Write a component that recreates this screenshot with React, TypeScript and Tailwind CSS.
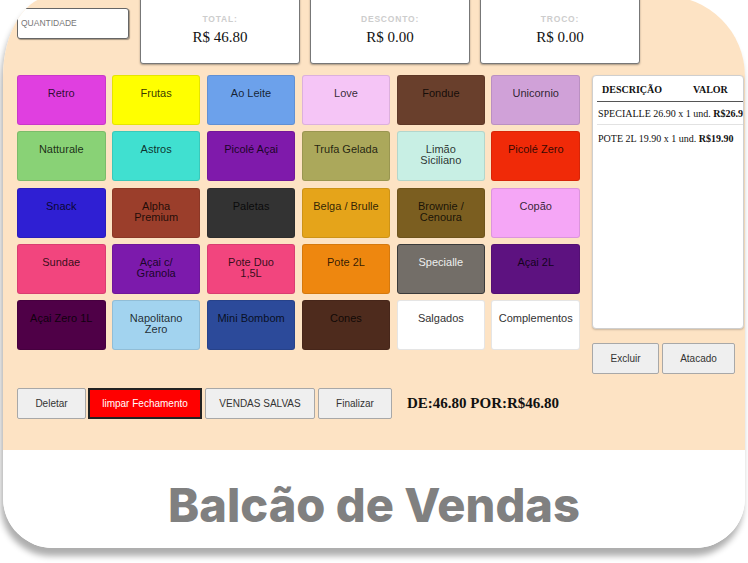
import React from 'react';

type Tile = { lines: string[]; bg: string; text?: string; border?: string };

const tiles: Tile[] = [
  { lines: ['Retro'], bg: 'bg-[#e03fe0]' },
  { lines: ['Frutas'], bg: 'bg-[#ffff00]' },
  { lines: ['Ao Leite'], bg: 'bg-[#6ca1eb]' },
  { lines: ['Love'], bg: 'bg-[#f5c5f6]' },
  { lines: ['Fondue'], bg: 'bg-[#693f2c]' },
  { lines: ['Unicornio'], bg: 'bg-[#d0a1d8]' },

  { lines: ['Natturale'], bg: 'bg-[#89d276]' },
  { lines: ['Astros'], bg: 'bg-[#40e0d0]' },
  { lines: ['Picolé Açai'], bg: 'bg-[#7f1aab]' },
  { lines: ['Trufa Gelada'], bg: 'bg-[#aba85b]' },
  { lines: ['Limão', 'Siciliano'], bg: 'bg-[#c8efe4]' },
  { lines: ['Picolé Zero'], bg: 'bg-[#f02a08]' },

  { lines: ['Snack'], bg: 'bg-[#2f1fd3]' },
  { lines: ['Alpha', 'Premium'], bg: 'bg-[#9b3e2b]' },
  { lines: ['Paletas'], bg: 'bg-[#333333]' },
  { lines: ['Belga / Brulle'], bg: 'bg-[#e5a41a]' },
  { lines: ['Brownie /', 'Cenoura'], bg: 'bg-[#7b5e20]' },
  { lines: ['Copão'], bg: 'bg-[#f5a6f6]' },

  { lines: ['Sundae'], bg: 'bg-[#f2457e]' },
  { lines: ['Açai c/', 'Granola'], bg: 'bg-[#7c1aac]' },
  { lines: ['Pote Duo', '1,5L'], bg: 'bg-[#f2457e]' },
  { lines: ['Pote 2L'], bg: 'bg-[#ee870f]' },
  { lines: ['Specialle'], bg: 'bg-[#736e68]', text: 'text-[#eeeeee]', border: 'border-[#3a3a3a]' },
  { lines: ['Açai 2L'], bg: 'bg-[#5d1280]' },

  { lines: ['Açai Zero 1L'], bg: 'bg-[#4f0047]' },
  { lines: ['Napolitano', 'Zero'], bg: 'bg-[#a2d3ef]' },
  { lines: ['Mini Bombom'], bg: 'bg-[#2c4a9a]' },
  { lines: ['Cones'], bg: 'bg-[#4e2b1d]' },
  { lines: ['Salgados'], bg: 'bg-white', text: 'text-[#333]' },
  { lines: ['Complementos'], bg: 'bg-white', text: 'text-[#333]' },
];

const SummaryBox = ({ label, value }: { label: string; value: string }) => (
  <div className="w-[160px] h-[68px] bg-white border border-[#777] rounded-b-[3px] shadow-[0_1px_2px_rgba(0,0,0,0.35)] flex flex-col items-center pt-[17px]">
    <span className="text-[8.5px] leading-[10px] font-bold tracking-[0.8px] text-[#cdcdcd]">{label}</span>
    <span className="mt-[5px] text-[15px] leading-[17px] text-[#111] font-['Liberation_Serif',serif]">{value}</span>
  </div>
);

const GrayButton = ({ label, w }: { label: string; w: string }) => (
  <button className={`${w} h-[31px] bg-[#efefef] border border-[#a8a8a8] rounded-[2px] text-[10px] text-[#333]`}>
    {label}
  </button>
);

export default function App() {
  return (
    <div className="w-[748px] h-[563px] bg-white overflow-hidden font-['Liberation_Sans',Arial,sans-serif]">
      <div className="ml-[3px] -mt-[4px] w-[742px] rounded-tl-[50px_80px] rounded-tr-[80px] rounded-b-[50px] bg-white shadow-[-2px_8px_6px_rgba(0,0,0,0.32)] overflow-hidden flex flex-col">
        {/* POS area */}
        <div className="h-[454px] bg-[#fde3c4] flex flex-col">
          {/* top row */}
          <div className="flex items-start">
            <div className="ml-[14px] mt-[12px] w-[112px] h-[31px] bg-white border border-[#666] rounded-[3px] shadow-[1px_1px_1px_rgba(0,0,0,0.35)] flex items-center pl-[3px]">
              <span className="text-[8.5px] text-[#777]">QUANTIDADE</span>
            </div>
            <div className="ml-[11px] flex gap-[10px]">
              <SummaryBox label="TOTAL:" value="R$ 46.80" />
              <SummaryBox label="DESCONTO:" value="R$ 0.00" />
              <SummaryBox label="TROCO:" value="R$ 0.00" />
            </div>
          </div>

          {/* main row */}
          <div className="mt-[11px] flex items-start">
            <div className="ml-[14px] w-[563px] grid grid-cols-6 gap-x-[6.4px] gap-y-[6.25px]">
              {tiles.map((t, i) => (
                <div
                  key={i}
                  className={`h-[50px] rounded-[3px] border ${t.border ?? 'border-black/10'} ${t.bg} ${t.text ?? 'text-black/80'} flex justify-center pt-[12px] text-[11px] leading-[11px] text-center whitespace-nowrap`}
                >
                  <span>
                    {t.lines.map((l, j) => (
                      <React.Fragment key={j}>
                        {j > 0 && <br />}
                        {l}
                      </React.Fragment>
                    ))}
                  </span>
                </div>
              ))}
            </div>

            <div className="ml-[12px] w-[152px] flex flex-col">
              <div className="h-[254px] bg-white border border-[#cfcfcf] rounded-[4px] shadow-[0_1px_2px_rgba(0,0,0,0.2)] overflow-hidden font-['Liberation_Serif',serif] text-[10px] text-[#111]">
                <div className="ml-[4px] h-[26px] border-b border-[#555] flex items-center pl-[5px] pt-[2px] font-bold">
                  <span className="w-[91px]">DESCRIÇÃO</span>
                  <span>VALOR</span>
                </div>
                <div className="ml-[4px] h-[23px] border-b border-[#e2e2e2] flex items-center pl-[1px] whitespace-nowrap">
                  SPECIALLE 26.90 x 1 und.&nbsp;<b>R$26.90</b>
                </div>
                <div className="ml-[4px] h-[26px] flex items-center pl-[1px] whitespace-nowrap">
                  POTE 2L 19.90 x 1 und.&nbsp;<b>R$19.90</b>
                </div>
              </div>
              <div className="mt-[14px] flex gap-[3px]">
                <GrayButton label="Excluir" w="w-[67px]" />
                <GrayButton label="Atacado" w="w-[73px]" />
              </div>
            </div>
          </div>

          {/* bottom row */}
          <div className="mt-[14px] ml-[14px] flex items-center">
            <GrayButton label="Deletar" w="w-[69px]" />
            <button className="ml-[2px] w-[114px] h-[31px] bg-[#ff0000] border-2 border-[#222] text-[10px] text-white">
              limpar Fechamento
            </button>
            <div className="ml-[3px]">
              <GrayButton label="VENDAS SALVAS" w="w-[110px]" />
            </div>
            <div className="ml-[3px]">
              <GrayButton label="Finalizar" w="w-[74px]" />
            </div>
            <span className="ml-[15px] text-[15px] font-bold text-[#111] font-['Liberation_Serif',serif]">
              DE:46.80 POR:R$46.80
            </span>
          </div>
        </div>

        {/* title */}
        <div className="h-[98px] bg-white flex items-center justify-center pt-[10px]">
          <h1 className="text-[47px] leading-none font-extrabold text-[#808080] font-['Inter',sans-serif]">
            Balcão de Vendas
          </h1>
        </div>
      </div>
    </div>
  );
}
